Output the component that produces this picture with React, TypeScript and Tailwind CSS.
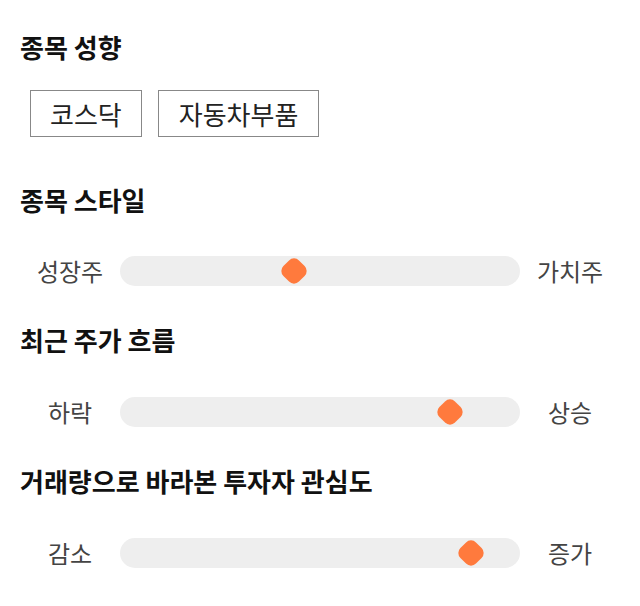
import React from 'react';

const font = { fontFamily: '"Noto Sans CJK KR", "Noto Sans", sans-serif' };

const Slider = ({ left, right, value }: { left: string; right: string; value: number }) => (
  <div className="flex items-center px-5 h-[30px]">
    <span className="w-[100px] text-center text-[24px] text-[#444]">{left}</span>
    <div className="relative flex-1 h-[30px] rounded-full bg-[#eeeeee]">
      <div
        className="absolute top-1/2 w-[22px] h-[22px] -translate-x-1/2 -translate-y-1/2 rotate-45 rounded-[7px] bg-[#ff7a3d]"
        style={{ left: `${value}%` }}
      />
    </div>
    <span className="w-[100px] text-center text-[24px] text-[#444]">{right}</span>
  </div>
);

export default function App() {
  return (
    <div className="w-[640px] h-[606px] bg-white text-[#111]" style={font}>
      <div className="px-5 pt-[28px]">
        <h2 className="text-[26px] font-bold leading-[38px]">종목 성향</h2>
        <div className="flex gap-4 mt-[24px] ml-[10px]">
          <span className="border border-[#888] px-[19px] h-[47px] flex items-center text-[26px] text-[#222]">코스닥</span>
          <span className="border border-[#888] px-[20px] h-[47px] flex items-center text-[26px] text-[#222]">자동차부품</span>
        </div>
        <h2 className="text-[26px] font-bold leading-[38px] mt-[44px]">종목 스타일</h2>
      </div>
      <div className="mt-[37px]">
        <Slider left="성장주" right="가치주" value={43.5} />
      </div>
      <div className="px-5 mt-[35px]">
        <h2 className="text-[26px] font-bold leading-[38px]">최근 주가 흐름</h2>
      </div>
      <div className="mt-[38px]">
        <Slider left="하락" right="상승" value={82.4} />
      </div>
      <div className="px-5 mt-[35px]">
        <h2 className="text-[26px] font-bold leading-[38px]">거래량으로 바라본 투자자 관심도</h2>
      </div>
      <div className="mt-[38px]">
        <Slider left="감소" right="증가" value={87.7} />
      </div>
    </div>
  );
}
